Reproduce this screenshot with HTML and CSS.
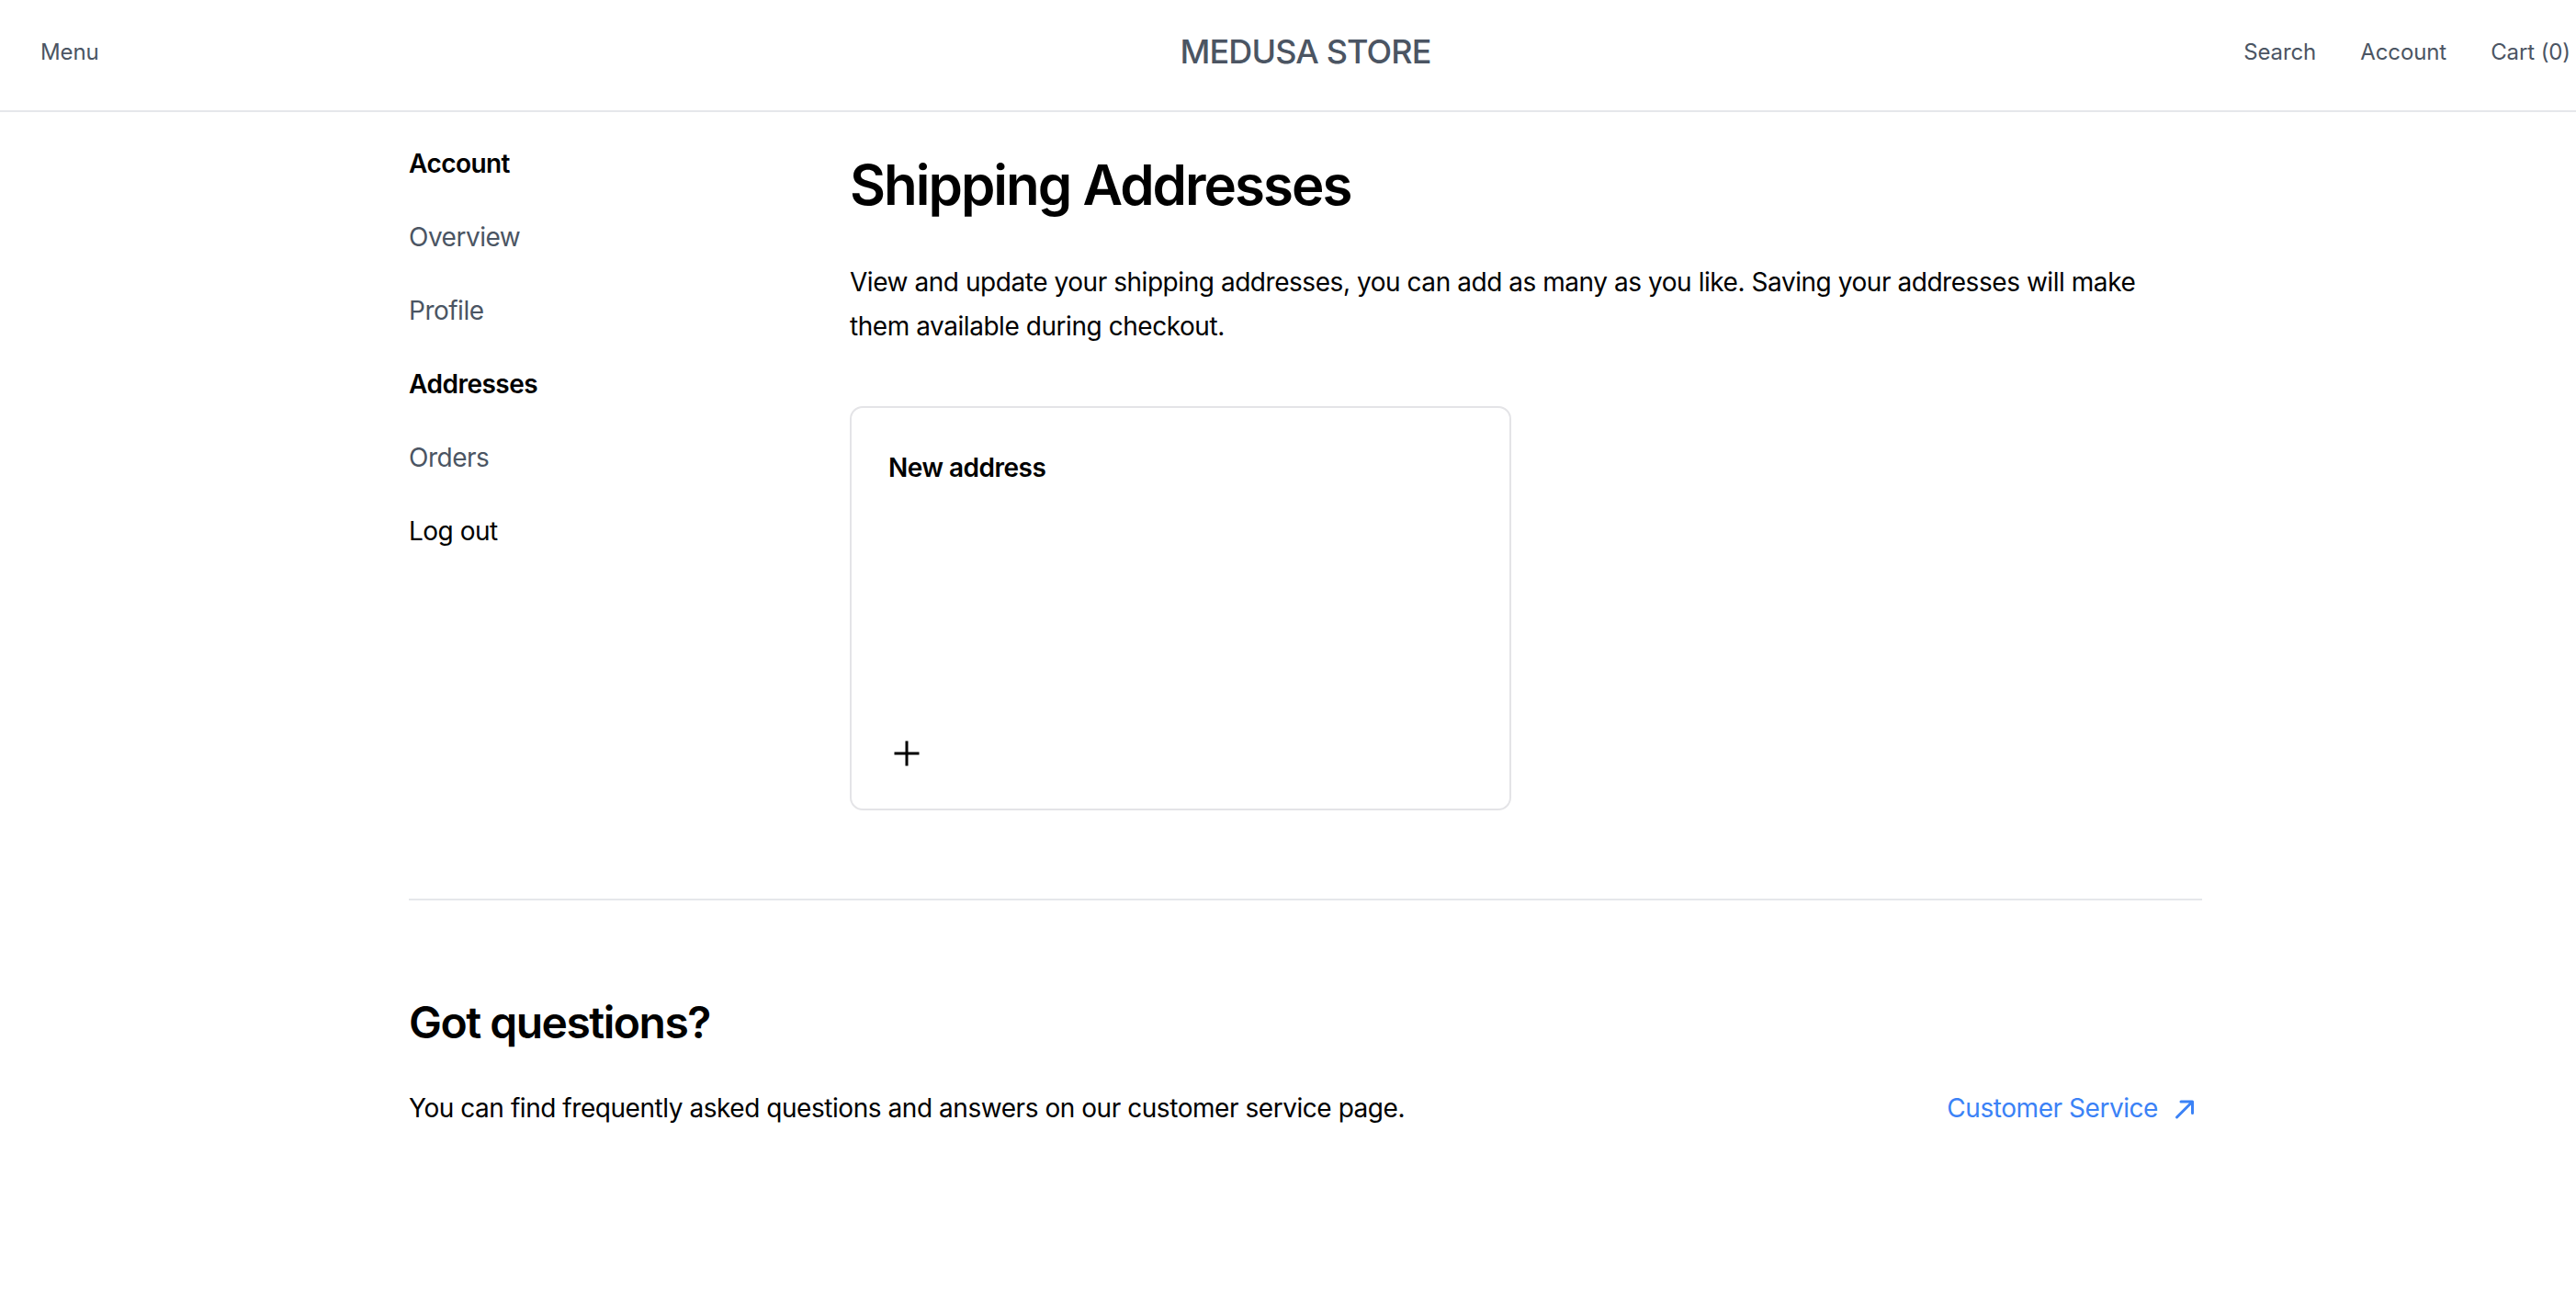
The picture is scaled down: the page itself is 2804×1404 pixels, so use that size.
FILE: index.html
```html
<!DOCTYPE html>
<html lang="en">
<head>
<meta charset="utf-8">
<title>Shipping Addresses | Medusa Store</title>
<link rel="stylesheet" href="styles.css">
</head>
<body>
<div class="page">
  <header class="site-header">
    <div class="header-left">
      <a class="nav-link" href="#">Menu</a>
    </div>
    <div class="header-center">
      <a class="brand" href="#">MEDUSA STORE</a>
    </div>
    <nav class="header-right">
      <a class="nav-link" href="#">Search</a>
      <a class="nav-link" href="#">Account</a>
      <a class="nav-link" href="#">Cart (0)</a>
    </nav>
  </header>

  <main class="account">
    <div class="account-grid">
      <aside class="account-nav">
        <h3 class="nav-title">Account</h3>
        <ul class="nav-list">
          <li><a class="nav-item" href="#">Overview</a></li>
          <li><a class="nav-item" href="#">Profile</a></li>
          <li><a class="nav-item active" href="#">Addresses</a></li>
          <li><a class="nav-item" href="#">Orders</a></li>
          <li><button class="nav-item logout" type="button">Log out</button></li>
        </ul>
      </aside>

      <section class="account-main">
        <h1 class="page-title">Shipping Addresses</h1>
        <p class="page-desc">View and update your shipping addresses, you can add as many as you like. Saving your addresses will make them available during checkout.</p>
        <div class="address-grid">
          <button class="add-card" type="button">
            <span class="add-card-title">New address</span>
            <svg class="plus-icon" width="40" height="40" viewBox="0 0 40 40" fill="none" aria-hidden="true">
              <path d="M20 6.5V33.5M6.5 20H33.5" stroke="#000" stroke-width="3"/>
            </svg>
          </button>
        </div>
      </section>
    </div>

    <section class="faq">
      <div class="faq-text">
        <h3 class="faq-title">Got questions?</h3>
        <p class="faq-desc">You can find frequently asked questions and answers on our customer service page.</p>
      </div>
      <a class="faq-link" href="#">
        <span>Customer Service</span>
        <svg class="arrow-icon" width="40" height="40" viewBox="0 0 40 40" fill="none" aria-hidden="true">
          <path d="M12.5 30L29.5 13M17 13H29.5V25.5" stroke="#3b82f6" stroke-width="3" stroke-linecap="round" stroke-linejoin="round"/>
        </svg>
      </a>
    </section>
  </main>
</div>
</body>
</html>
```

FILE: styles.css
```css
html, body {
  margin: 0;
  padding: 0;
  overflow: hidden;
  background: #ffffff;
}

body {
  font-family: "Inter", "Noto Sans", "Liberation Sans", sans-serif;
  color: #000000;
  -webkit-font-smoothing: antialiased;
}

a {
  color: inherit;
  text-decoration: none;
}

.page {
  width: 2842px;
}

/* Header */
.site-header {
  height: 113px;
  padding: 0 44px 7px;
  border-bottom: 2px solid #e5e7eb;
  display: grid;
  grid-template-columns: 1fr auto 1fr;
  align-items: center;
}

.header-left {
  display: flex;
  align-items: center;
}

.header-center {
  display: flex;
  justify-content: center;
}

.header-right {
  display: flex;
  justify-content: flex-end;
  align-items: center;
  gap: 48px;
}

.nav-link {
  font-size: 24px;
  line-height: 36px;
  letter-spacing: -0.1px;
  color: #4b5563;
}

.brand {
  font-size: 36px;
  line-height: 44px;
  font-weight: 500;
  letter-spacing: -0.9px;
  color: #4b5563;
  padding-bottom: 2px;
}

/* Account layout */
.account {
  width: 1952px;
  margin: 0 auto;
}

.account-grid {
  display: grid;
  grid-template-columns: 480px 1fr;
  padding-top: 28px;
}

.account-nav {
  display: flex;
  flex-direction: column;
  gap: 32px;
  padding-top: 4px;
}

.nav-title {
  margin: 0;
  font-size: 28px;
  line-height: 48px;
  font-weight: 600;
  letter-spacing: -0.55px;
  color: #000000;
}

.nav-list {
  list-style: none;
  margin: 0;
  padding: 0;
  display: flex;
  flex-direction: column;
  gap: 32px;
}

.nav-item {
  display: block;
  font-size: 28px;
  line-height: 48px;
  letter-spacing: -0.5px;
  color: #4b5563;
}

.nav-item.active {
  font-weight: 600;
  color: #000000;
}

.nav-item.logout {
  font-family: inherit;
  background: none;
  border: 0;
  padding: 0;
  color: #000000;
  cursor: pointer;
}

.account-main {
  padding-top: 15px;
}

.page-title {
  margin: 0;
  font-size: 60px;
  line-height: 72px;
  font-weight: 600;
  letter-spacing: -2px;
  color: #000000;
}

.page-desc {
  margin: 46px 0 0;
  max-width: 1440px;
  font-size: 28px;
  line-height: 48px;
  letter-spacing: -0.45px;
  color: #000000;
}

.address-grid {
  margin-top: 63px;
  display: grid;
  grid-template-columns: 1fr 1fr;
  gap: 32px;
}

.add-card {
  box-sizing: border-box;
  height: 440px;
  padding: 45px 40px 40px;
  border: 2px solid #e4e4e7;
  border-radius: 14px;
  background: #ffffff;
  display: flex;
  flex-direction: column;
  justify-content: space-between;
  align-items: flex-start;
  font-family: inherit;
  text-align: left;
  cursor: pointer;
}

.add-card-title {
  font-size: 28px;
  line-height: 40px;
  font-weight: 600;
  letter-spacing: -0.5px;
  color: #000000;
}

.plus-icon {
  display: block;
}

/* FAQ */
.faq {
  margin-top: 96px;
  border-top: 2px solid #e5e7eb;
  padding: 101px 0 96px;
  display: flex;
  justify-content: space-between;
  align-items: flex-end;
}

.faq-title {
  margin: 0 0 37px;
  font-size: 48px;
  line-height: 64px;
  font-weight: 600;
  letter-spacing: -1.5px;
  color: #000000;
}

.faq-desc {
  margin: 0;
  font-size: 28px;
  line-height: 48px;
  letter-spacing: -0.45px;
  color: #000000;
}

.faq-link {
  display: flex;
  align-items: center;
  gap: 8px;
  font-size: 28px;
  line-height: 48px;
  letter-spacing: -0.45px;
  color: #3b82f6;
}

.arrow-icon {
  display: block;
}
```
